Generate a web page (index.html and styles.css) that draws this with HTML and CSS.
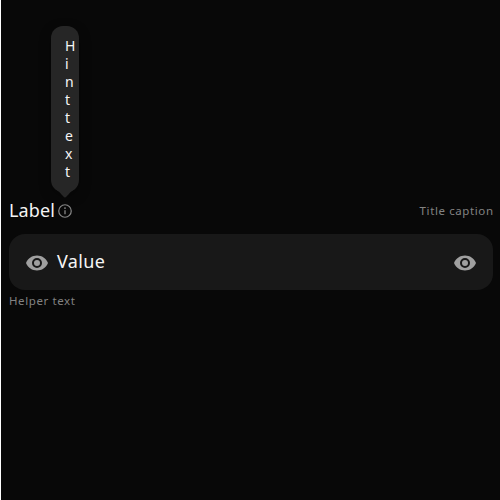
FILE: index.html
```html
<!DOCTYPE html>
<html lang="en">
<head>
<meta charset="utf-8">
<title>Text field</title>
<link rel="stylesheet" href="styles.css">
</head>
<body>
<main class="field">
  <div class="header">
    <label class="label" for="value">Label</label>
    <span class="hint">
      <svg class="info" viewBox="0 0 16 16" aria-hidden="true">
        <circle cx="8" cy="8" r="6.25" fill="none" stroke="currentColor" stroke-width="1.2"/>
        <path d="M8 7.2v4" stroke="currentColor" stroke-width="1.3"/>
        <circle cx="8" cy="5.1" r=".9" fill="currentColor"/>
      </svg>
      <span class="tooltip" role="tooltip">Hint text
        <svg class="arrow" viewBox="0 0 20 9" aria-hidden="true"><path d="M0 0H20C14 3 12 8.500 10 8.500S6 3 0 0Z" fill="currentColor"/></svg>
      </span>
    </span>
    <span class="caption">Title caption</span>
  </div>
  <div class="control">
    <svg class="eye" viewBox="0 0 24 24" aria-hidden="true"><path fill="currentColor" fill-rule="evenodd" d="M12 4.5C7.2 4.5 3 7.2 1 12c2 4.8 6.200 7.500 11 7.500s9-2.700 11-7.500c-2-4.800-6.200-7.500-11-7.500ZM12 17a5 5 0 1 1 0-10 5 5 0 0 1 0 10Zm0-8a3 3 0 1 0 0 6 3 3 0 0 0 0-6Z"/></svg>
    <span class="value" id="value">Value</span>
    <svg class="eye" viewBox="0 0 24 24" aria-hidden="true"><path fill="currentColor" fill-rule="evenodd" d="M12 4.5C7.2 4.5 3 7.2 1 12c2 4.8 6.200 7.500 11 7.500s9-2.700 11-7.500c-2-4.800-6.200-7.500-11-7.500ZM12 17a5 5 0 1 1 0-10 5 5 0 0 1 0 10Zm0-8a3 3 0 1 0 0 6 3 3 0 0 0 0-6Z"/></svg>
  </div>
  <div class="helper">Helper text</div>
</main>
</body>
</html>
```
FILE: styles.css
```css
* { box-sizing: border-box; }
body {
  margin: 0;
  height: 500px;
  overflow: hidden;
  border-left: 1px solid #fff;
  background: #080808;
  color: #f5f5f5;
  font-family: "Noto Sans", sans-serif;
}
.field { padding: 200px 7px 0 8px; }
.header { display: flex; align-items: center; height: 22px; margin-bottom: 12px; }
.label { width: 46px; padding-bottom: 1px; font-size: 18px; line-height: 21px; letter-spacing: .1px; }
.hint { position: relative; display: flex; margin-left: 2px; }
.info { width: 16px; height: 16px; color: #888; }
.tooltip {
  position: absolute;
  bottom: 27px;
  left: -6px;
  width: 28px;
  height: 166px;
  padding: 11px 2px 11px 14px;
  border-radius: 12px;
  background: #262626;
  box-shadow: 0 4px 12px rgba(0, 0, 0, .35);
  font-size: 14px;
  line-height: 18px;
  word-break: break-all;
}
.arrow { position: absolute; left: 4px; bottom: -6px; width: 20px; height: 9px; color: #262626; }
.caption, .helper { color: #828282; font-size: 11.5px; line-height: 14px; letter-spacing: .6px; }
.caption { margin-left: auto; margin-right: -.6px; }
.control {
  display: flex;
  align-items: center;
  height: 56px;
  padding: 0 16px;
  border-radius: 16px;
  background: #181818;
}
.eye { width: 24px; height: 24px; margin-top: 1px; color: #a0a0a0; }
.value { flex: 1; margin-left: 8px; padding-bottom: 1px; font-size: 18px; line-height: 21px; letter-spacing: .35px; }
.helper { margin-top: 4px; }
```
